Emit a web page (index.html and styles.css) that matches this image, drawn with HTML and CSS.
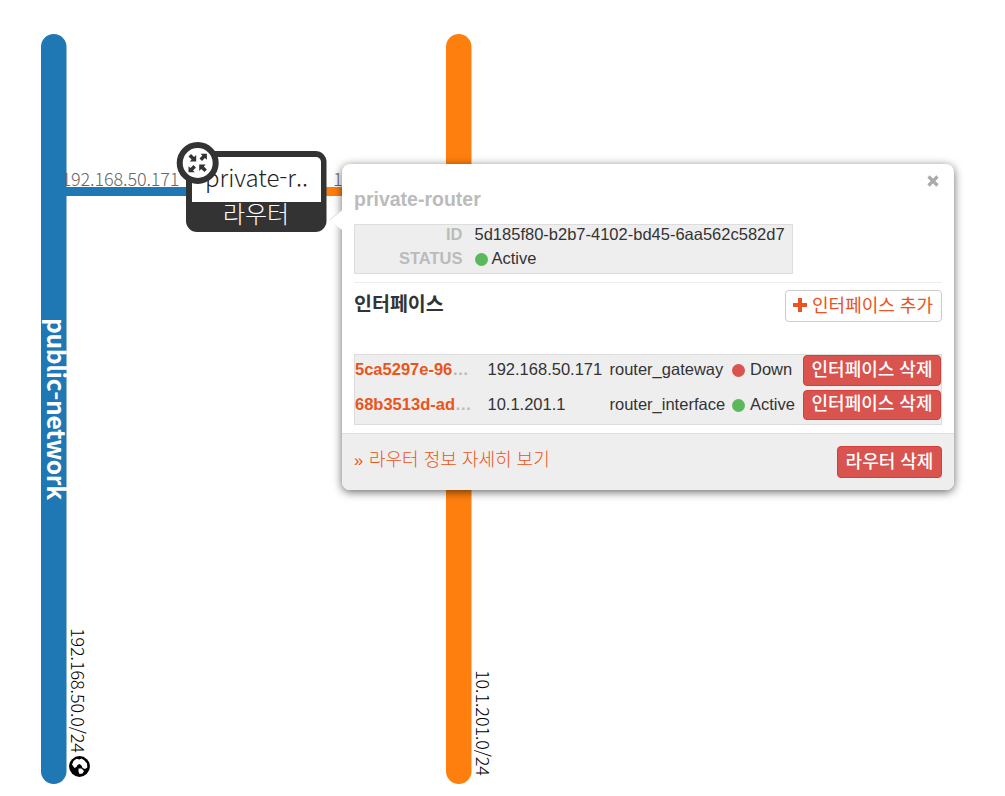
FILE: index.html
```html
<!DOCTYPE html>
<html lang="ko">
<head>
<meta charset="utf-8">
<title>private-router</title>
<link rel="stylesheet" href="styles.css">
</head>
<body>
<main class="topology">
  <svg class="canvas" width="1005" height="796" viewBox="0 0 1005 796">
    <rect class="net-public" x="41" y="34" width="25.5" height="750" rx="12.75"/>
    <rect class="net-private" x="446" y="34" width="25.5" height="750" rx="12.75"/>
    <text class="net-name" transform="translate(47 318) rotate(90)" textLength="182">public-network</text>
    <text class="cidr" transform="translate(71 628) rotate(90)" textLength="125">192.168.50.0/24</text>
    <text class="cidr" transform="translate(476 670) rotate(90)" textLength="106">10.1.201.0/24</text>
    <g transform="translate(79.500 766.500)">
      <circle r="10.400" fill="#000"/>
      <path fill="#fff" d="M-7.500-2-6-5.500-3-7.800 0-7 2-8 5-6 7.500-3 7.800 1 5.500 2.500 3 1.500 2-1 0-2.500-2-1.500-3 .5-5 1.500Z"/>
      <path fill="#fff" d="M-1 2 2 2 4.500 4.500 3 7 0 7.500-1 5Z"/>
    </g>
    <rect class="net-public" x="66" y="187" width="122" height="9"/>
    <rect class="net-private" x="325" y="187" width="121" height="9"/>
    <text class="ip" x="61.500" y="186" textLength="118">192.168.50.171</text>
    <text class="ip" x="333" y="186">10.1.201.1</text>
    <rect x="186" y="151" width="140.500" height="81" rx="11" fill="#333"/>
    <path d="M192 202V162a5 5 0 0 1 5-5H316a5 5 0 0 1 5 5V202Z" fill="#fff"/>
    <text class="device-name" x="205" y="187" textLength="103">private-r..</text>
    <text class="device-type" x="256" y="223" textLength="66">라우터</text>
    <circle cx="197.700" cy="163" r="18" fill="#fff" stroke="#333" stroke-width="6"/>
    <g transform="translate(197.700 163)" fill="#333">
      <path d="M-1.500-1.500V-8L-3.600-5.900-6.700-9-9.200-6.500-6.100-3.400-8-1.500Z"/>
      <path d="M1.500 1.500H8L6.100 3.400 9.200 6.500 6.700 9 3.600 5.900 1.500 8Z"/>
      <path d="M9.200-9.200V-3.200L7.200-5 4.300-2.100 1.800-4.600 4.700-7.500 2.800-9.200Z"/>
      <path d="M-9.200 9.200V3.200L-7.200 5-4.300 2.100-1.800 4.600-4.700 7.500-2.800 9.200Z"/>
    </g>
  </svg>

  <section class="balloon">
    <svg class="tip" width="13" height="20" viewBox="0 0 13 20"><path d="M13 0 0 10 13 20Z" fill="#fff"/><path d="M13 .5 .5 10" stroke="#ddd" fill="none"/></svg>
    <svg class="close" width="12" height="12" viewBox="0 0 12 12"><path d="M1.500 1.500 10.500 10.500M10.500 1.500 1.500 10.500" stroke="#aaa" stroke-width="3.200"/></svg>
    <div class="body">
      <h3 class="title">private-router</h3>
      <dl class="info">
        <dt>ID</dt><dd>5d185f80-b2b7-4102-bd45-6aa562c582d7</dd>
        <dt>STATUS</dt><dd><i class="dot up"></i>Active</dd>
      </dl>
      <div class="section-head">
        <h4 class="subtitle">인터페이스</h4>
        <button class="btn add"><svg class="plus" width="14" height="14" viewBox="0 0 14 14"><path d="M5 0h4v5h5v4H9v5H5V9H0V5h5Z" fill="#e95420"/></svg>인터페이스 추가</button>
      </div>
      <div class="ports">
        <div class="port"><span class="port-id"><a>5ca5297e-96</a><span class="more-dots">…</span></span><span>192.168.50.171</span><span>router_gateway</span><span><i class="dot down"></i>Down</span><button class="btn danger">인터페이스 삭제</button></div>
        <div class="port"><span class="port-id"><a>68b3513d-ad</a><span class="more-dots">…</span></span><span>10.1.201.1</span><span>router_interface</span><span><i class="dot up"></i>Active</span><button class="btn danger">인터페이스 삭제</button></div>
      </div>
    </div>
    <footer class="foot"><a class="more"><span class="raquo">»</span>라우터 정보 자세히 보기</a><button class="btn danger tall">라우터 삭제</button></footer>
  </section>
</main>
</body>
</html>
```
FILE: styles.css
```css
* { box-sizing: border-box; }
body { margin: 0; background: #fff; color: #333; font: 16.5px/24px "Liberation Sans", "Noto Sans CJK KR", sans-serif; }
.topology { position: relative; width: 1005px; height: 796px; overflow: hidden; }
.canvas { display: block; font-family: "Noto Sans CJK KR", sans-serif; font-weight: 300; }
.net-public { fill: #1f77b4; }
.net-private { fill: #ff7f0e; }
.net-name { fill: #fff; font-size: 24.5px; font-weight: 700; }
.cidr { fill: #000; font-size: 18px; }
.ip { fill: #666; font-size: 18px; }
.device-name { fill: #222; font-size: 24px; }
.device-type { fill: #fff; font-size: 24px; text-anchor: middle; }

.balloon { position: absolute; left: 342px; top: 164px; width: 612px; height: 326px; border-radius: 8px; background: #fff; box-shadow: 0 2px 10px rgba(0,0,0,.6); display: flex; flex-direction: column; }
.tip { position: absolute; left: -13px; top: 46px; }
.close { position: absolute; right: 15px; top: 11px; }
.body { flex: 1; padding: 23px 12px 0; }
.title { margin: 0; font-size: 19.5px; line-height: 24px; color: #bbb; }
.info { display: grid; grid-template-columns: 107.5px auto; grid-auto-rows: 24px; column-gap: 12px; width: 439px; height: 50px; margin: 13px 0 8px; border: 1px solid #ddd; background: #eee; line-height: 18px; }
.info dt { text-align: right; font-weight: 700; color: #bbb; }
.info dd { margin: 0; white-space: nowrap; }
.dot { display: inline-block; width: 13px; height: 13px; margin-right: 5px; border-radius: 50%; vertical-align: -2px; }
.info .dot { margin-right: 4px; }
.up { background: #5cb85c; }
.down { background: #d9534f; }
.section-head { display: flex; justify-content: space-between; align-items: flex-start; height: 72px; padding-top: 7px; border-top: 1px solid #eee; }
.subtitle { margin: 0; font-size: 19.5px; line-height: 28px; }
.btn { display: flex; align-items: center; justify-content: center; border: 1px solid #ccc; border-radius: 4px; padding: 0 0 5px; background: #fff; font: 18px/24px "Noto Sans CJK KR", sans-serif; white-space: nowrap; }
.add { width: 157px; height: 32px; padding-right: 1px; color: #e95420; }
.plus { margin: 3px 5px 0 0; }
.danger { width: 138px; height: 30.5px; border-color: #d43f3a; background: #d9534f; color: #fff; font-weight: 500; }
.tall { width: 105px; height: 32px; }
.ports { height: 71px; border: 1px solid #ddd; background: #eee; }
.port { display: grid; grid-template-columns: 132.500px 122px 122.500px 71px 138px; height: 34.500px; line-height: 29px; white-space: nowrap; }
.port-id { color: #bbb; font-weight: 700; }
.port-id a { color: #e95420; }
.more-dots { letter-spacing: 1px; }
.foot { display: flex; justify-content: space-between; align-items: flex-start; height: 57px; padding: 12px 12px 0; border-top: 1px solid #ddd; border-radius: 0 0 8px 8px; background: #eee; }
.more { display: flex; color: #e95420; font: 300 18px/24px "Noto Sans CJK KR", sans-serif; }
.raquo { width: 15px; font: 16.5px/28px "Liberation Sans", sans-serif; }
```
